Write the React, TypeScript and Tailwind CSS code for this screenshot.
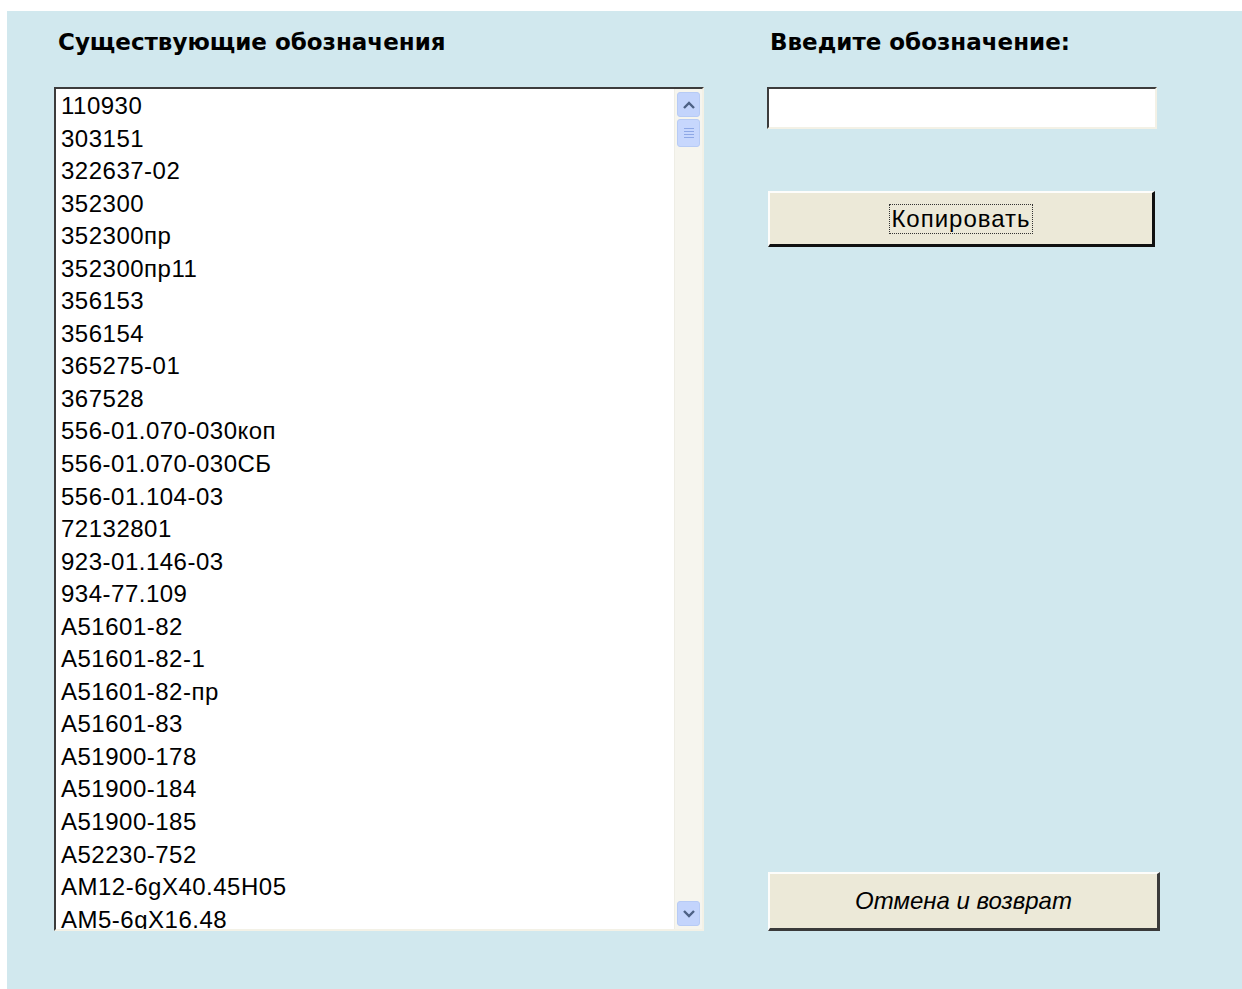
import React from "react";

const codes = [
  "110930",
  "303151",
  "322637-02",
  "352300",
  "352300пр",
  "352300пр11",
  "356153",
  "356154",
  "365275-01",
  "367528",
  "556-01.070-030коп",
  "556-01.070-030СБ",
  "556-01.104-03",
  "72132801",
  "923-01.146-03",
  "934-77.109",
  "А51601-82",
  "А51601-82-1",
  "А51601-82-пр",
  "А51601-83",
  "А51900-178",
  "А51900-184",
  "А51900-185",
  "А52230-752",
  "АМ12-6gX40.45Н05",
  "АМ5-6gX16.48",
  "АМ6-6gX20.48",
];

const font = { fontFamily: '"Liberation Sans", Arial, sans-serif' };
const headFont = { fontFamily: '"DejaVu Sans", Verdana, sans-serif' };

function Chevron({ up }: { up?: boolean }) {
  return (
    <svg width="12" height="8" viewBox="0 0 12 8">
      <path
        d={up ? "M1 7 L6 2 L11 7" : "M1 1 L6 6 L11 1"}
        fill="none"
        stroke="#4d6185"
        strokeWidth="2.4"
      />
    </svg>
  );
}

function ScrollBar() {
  return (
    <div className="flex flex-col w-[28px] h-full bg-[#f6f5ee] border-l border-[#eeede5] px-[2px] py-[3px]">
      <div className="h-[25px] rounded-[3px] border border-[#b7cbf5] bg-[#c3d4fc] flex items-center justify-center">
        <Chevron up />
      </div>
      <div className="mt-[2px] h-[28px] rounded-[3px] border border-[#b7cbf5] bg-[#c7d7fd] flex flex-col items-center justify-center gap-[2px]">
        <span className="block w-[10px] h-px bg-[#8ea8e6]" />
        <span className="block w-[10px] h-px bg-[#8ea8e6]" />
        <span className="block w-[10px] h-px bg-[#8ea8e6]" />
        <span className="block w-[10px] h-px bg-[#8ea8e6]" />
      </div>
      <div className="flex-1" />
      <div className="h-[25px] rounded-[3px] border border-[#b7cbf5] bg-[#c3d4fc] flex items-center justify-center">
        <Chevron />
      </div>
    </div>
  );
}

export default function App() {
  return (
    <div className="w-[1242px] h-[989px] bg-white pt-[11px] pl-[7px] overflow-hidden" style={font}>
      <div className="h-full bg-[#d1e8ee] flex">
        {/* список существующих */}
        <div className="ml-[47px] w-[650px] flex flex-col">
          <div
            className="mt-[19px] pl-[4px] h-[57px] text-[23px] font-bold text-black leading-[24px]"
            style={headFont}
          >
            Существующие обозначения
          </div>
          <div className="h-[844px] flex bg-white border-t-2 border-l-2 border-t-[#3c3c3c] border-l-[#3c3c3c] border-r-2 border-b-2 border-r-[#f3f1e6] border-b-[#f3f1e6]">
            <div className="flex-1 overflow-hidden pl-[5px] pt-[1px] text-[24px] tracking-[0.5px] text-black">
              {codes.map((c) => (
                <div key={c} className="h-[32.56px] leading-[32.56px] whitespace-nowrap">
                  {c}
                </div>
              ))}
            </div>
            <ScrollBar />
          </div>
        </div>

        {/* ввод и кнопки */}
        <div className="ml-[63px] w-[393px] flex flex-col">
          <div
            className="mt-[19px] pl-[3px] h-[57px] text-[23px] font-bold text-black leading-[24px]"
            style={headFont}
          >
            Введите обозначение:
          </div>
          <input
            type="text"
            className="w-[390px] h-[42px] bg-white outline-none border-t-2 border-l-2 border-t-[#3c3c3c] border-l-[#3c3c3c] border-r-2 border-b-2 border-r-[#f3f1e6] border-b-[#f3f1e6]"
          />
          <button
            type="button"
            className="mt-[62px] ml-px w-[387px] h-[56px] bg-[#ece9d8] border-t-2 border-l-2 border-t-[#fdfdfb] border-l-[#fdfdfb] border-r-[3px] border-b-[3px] border-r-[#101010] border-b-[#101010] flex items-center justify-center"
          >
            <span className="border border-dotted border-[#333] px-[1px] text-[24px] leading-[28px] tracking-[1px] text-black">
              Копировать
            </span>
          </button>
          <div className="flex-1" />
          <button
            type="button"
            className="mb-[58px] ml-px w-[392px] h-[59px] bg-[#ece9d8] border-t-2 border-l-2 border-t-[#fdfdfb] border-l-[#fdfdfb] border-r-[3px] border-b-[3px] border-r-[#3a3a3a] border-b-[#3a3a3a] flex items-center justify-center text-[24px] italic text-black"
          >
            Отмена и возврат
          </button>
        </div>
      </div>
    </div>
  );
}
